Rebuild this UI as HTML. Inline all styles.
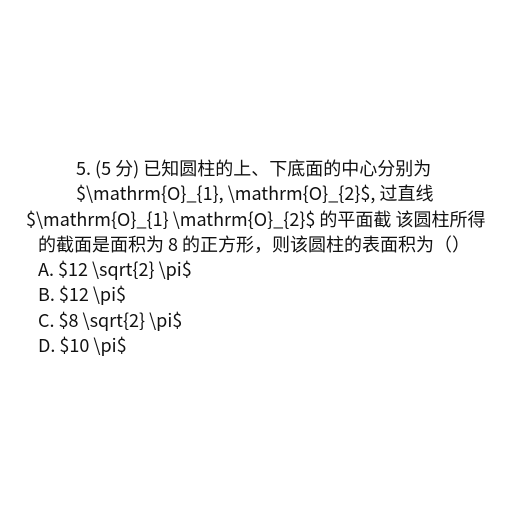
<!DOCTYPE html>
<html><head><meta charset="utf-8"><style>
html,body{margin:0;padding:0;background:#fff;width:512px;height:512px;overflow:hidden}
.t{position:absolute;left:0;top:156px;font-family:"Noto Sans CJK SC","Liberation Sans",sans-serif;font-size:18px;line-height:25.3px;color:#111}
.t div{height:25.3px;white-space:nowrap}
</style></head><body>
<div class="t"><div style="padding-left:76px">5. (5 分) 已知圆柱的上、下底面的中心分别为</div><div style="padding-left:76px">$\mathrm{O}_{1}, \mathrm{O}_{2}$, 过直线</div><div style="padding-left:26px">$\mathrm{O}_{1} \mathrm{O}_{2}$ 的平面截 该圆柱所得</div><div style="padding-left:38px">的截面是面积为 8 的正方形，则该圆柱的表面积为（）</div><div style="padding-left:38px">A. $12 \sqrt{2} \pi$</div><div style="padding-left:38px">B. $12 \pi$</div><div style="padding-left:38px">C. $8 \sqrt{2} \pi$</div><div style="padding-left:38px">D. $10 \pi$</div></div>
</body></html>
